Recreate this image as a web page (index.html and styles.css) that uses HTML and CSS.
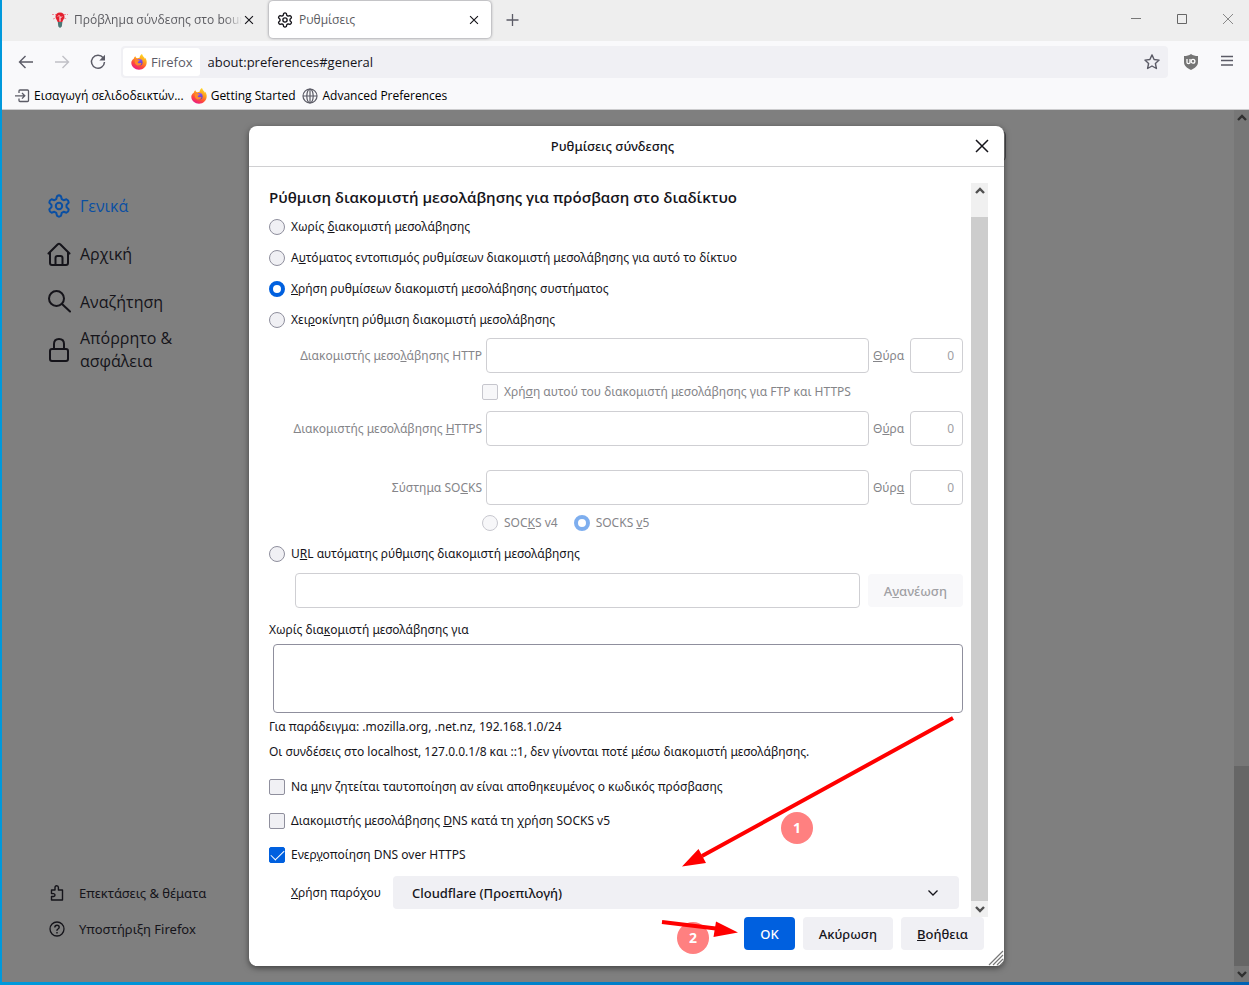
FILE: index.html
```
<!DOCTYPE html>
<html lang="el">
<head>
<meta charset="utf-8">
<title>Ρυθμίσεις</title>
<link rel="stylesheet" href="styles.css">
</head>
<body>
<svg class="defs" width="0" height="0" aria-hidden="true">
  <defs>
    <linearGradient id="flame" x1="0.8" y1="0" x2="0.3" y2="1">
      <stop offset="0" stop-color="#ffe226"/><stop offset="0.4" stop-color="#ff9a1f"/><stop offset="0.7" stop-color="#ff4a3a"/><stop offset="1" stop-color="#e8178a"/>
    </linearGradient>
    <linearGradient id="globe" x1="0.3" y1="0" x2="0.6" y2="1">
      <stop offset="0" stop-color="#9059ff"/><stop offset="1" stop-color="#5b3bc4"/>
    </linearGradient>
    <symbol id="firefox" viewBox="0 0 16 16">
      <path fill="url(#flame)" d="M15.400 6.200c-.3-1.200-1-2.200-1.700-2.700.2.600.3 1 .3 1.500C13.300 3.200 11.700 2.200 11 0 9.400 1 8.700 2.500 8.600 3.700c-.9 0-1.700.2-2.400.6-1.100-.3-1.600-1-1.700-2C3.400 3 2.900 3.900 2.800 4.700 1.200 5.700.2 7.300.3 9.100.6 12.900 3.900 15.800 8 15.800c4.300 0 7.700-3.400 7.700-7.500 0-.8-.1-1.400-.3-2.100z"/>
      <circle cx="8.300" cy="8.300" r="3.300" fill="url(#globe)"/>
      <path fill="#ff8a2a" d="M3.800 6.200c1-.8 2.200-.8 3.100-.4.700.3 1.100.5 1.800.4-.1.900-1.300 1.100-1.800 1.600-.4.500 0 1.300.9 1.500 1 .2 1.900-.4 2.700-.1-.5 1.500-1.800 2.400-3.300 2.300-2.200-.1-3.900-2.400-3.400-5.300z"/>
    </symbol>
    <symbol id="gear" viewBox="0 0 24 24">
      <path fill="none" stroke="currentColor" stroke-width="2" stroke-linejoin="round" d="M10 2.200Q12 .6 14 2.200L14.700 5.100L16.600 6.200L19.500 5.300Q21.900 6.300 21.600 8.800L19.500 10.900V13.100L21.600 15.200Q21.900 17.700 19.500 18.700L16.600 17.800L14.700 18.900L14 21.800Q12 23.400 10 21.800L9.300 18.900L7.400 17.800L4.500 18.700Q2.100 17.700 2.400 15.200L4.500 13.100V10.900L2.400 8.800Q2.100 6.300 4.500 5.300L7.400 6.200L9.300 5.100Z"/>
      <circle cx="12" cy="12" r="3.200" fill="none" stroke="currentColor" stroke-width="2"/>
    </symbol>
    <symbol id="cross" viewBox="0 0 16 16"><path fill="none" stroke="currentColor" stroke-width="1.300" d="M3.500 3.500l9 9M12.500 3.500l-9 9"/></symbol>
    <symbol id="up" viewBox="0 0 16 16"><path fill="none" stroke="currentColor" stroke-width="2.400" d="M4 10l4-4 4 4"/></symbol>
    <symbol id="down" viewBox="0 0 16 16"><path fill="none" stroke="currentColor" stroke-width="2.400" d="M4 6l4 4 4-4"/></symbol>
  </defs>
</svg>

<header class="chrome">
  <div class="titlebar">
    <div class="tab">
      <svg class="i16" viewBox="0 0 16 16"><path stroke="#f28b9a" stroke-width="1" stroke-dasharray="2 1" d="M0 2.500h4M1 7l3-1M12 2.500h4M12 6l3 1"/><path fill="#e3202e" d="M8 .5c-2.900 0-4.500 2-4.500 4.200 0 2 1.500 3 2.200 5.300h4.600c.7-2.300 2.200-3.300 2.200-5.300C12.500 2.500 10.900.5 8 .5z"/><path fill="none" stroke="#fff" d="M6 4.500q1-2 2 0t2 0M8 5v4.500"/><path fill="#4c7775" d="M5.800 10h4.600l-.6 4.500L8 16l-1.700-1.500z"/></svg>
      <span class="tab-title tab-fade">Πρόβλημα σύνδεσης στο bourd</span>
      <button class="plain" aria-label="Κλείσιμο"><svg class="i14"><use href="#cross"/></svg></button>
    </div>
    <div class="tab tab-active">
      <svg class="i16"><use href="#gear"/></svg>
      <span class="tab-title">Ρυθμίσεις</span>
      <button class="plain" aria-label="Κλείσιμο"><svg class="i14"><use href="#cross"/></svg></button>
    </div>
    <button class="plain new-tab" aria-label="Νέα καρτέλα"><svg class="i16" viewBox="0 0 16 16"><path fill="none" stroke="#5b5b66" stroke-width="1.300" d="M2.500 8h12M8.500 2v12"/></svg></button>
    <div class="window-buttons">
      <button class="plain" aria-label="Ελαχιστοποίηση"><svg class="i16" viewBox="0 0 16 16"><path stroke="#777" d="M3 7.500h10"/></svg></button>
      <button class="plain" aria-label="Μεγιστοποίηση"><svg class="i16" viewBox="0 0 16 16"><path fill="none" stroke="#666" d="M3.500 3.500h9v9h-9z"/></svg></button>
      <button class="plain" aria-label="Κλείσιμο παραθύρου"><svg class="i16" viewBox="0 0 16 16"><path stroke="#888" d="M3 3l10 10M13 3L3 13"/></svg></button>
    </div>
  </div>
  <div class="navbar">
    <button class="plain tool" aria-label="Πίσω"><svg class="i16" viewBox="0 0 16 16"><path fill="none" stroke="#5b5b66" stroke-width="1.400" d="M15 8H1.500M7.500 2l-6 6 6 6"/></svg></button>
    <button class="plain tool" aria-label="Εμπρός"><svg class="i16" viewBox="0 0 16 16"><path fill="none" stroke="#c0c0c6" stroke-width="1.400" d="M1 8h13.500M8.500 2l6 6-6 6"/></svg></button>
    <button class="plain tool" aria-label="Ανανέωση"><svg class="i16" viewBox="0 0 16 16"><path fill="none" stroke="#5b5b66" stroke-width="1.500" d="M13.200 3.800A6.500 6.500 0 1 0 14.500 8"/><path fill="#5b5b66" d="M15 .8v5.700H9.300z"/></svg></button>
    <div class="urlbar">
      <button class="identity"><svg class="i16"><use href="#firefox"/></svg>Firefox</button>
      <input class="url" type="text" aria-label="Διεύθυνση" value="about:preferences#general">
      <button class="plain star" aria-label="Σελιδοδείκτης"><svg class="i16" viewBox="0 0 16 16"><path fill="none" stroke="#5b5b66" stroke-width="1.400" stroke-linejoin="round" d="M8 .9l2.100 4.600 5 .6-3.700 3.400 1 5L8 12l-4.400 2.500 1-5L.9 6.100l5-.6z"/></svg></button>
    </div>
    <button class="plain tool" aria-label="uBlock"><svg class="i16" viewBox="0 0 16 16"><path fill="#757575" d="M8 0c2 1.400 4.300 2 7 2v6c0 4-3.200 6.200-7 8-3.800-1.800-7-4-7-8V2c2.700 0 5-.6 7-2z"/><path fill="none" stroke="#fff" stroke-width="1.300" d="M4 5v3.400c0 1.500 3 1.500 3 0V5"/><circle cx="10" cy="7.300" r="1.900" fill="none" stroke="#fff" stroke-width="1.300"/></svg></button>
    <button class="plain tool" aria-label="Μενού"><svg class="i16" viewBox="0 0 16 16"><path stroke="#5b5b66" stroke-width="1.300" d="M2 2.500h12M2 6.500h12M2 11h12"/></svg></button>
  </div>
  <nav class="bookmarks">
    <a href="#"><svg class="i16" viewBox="0 0 16 16"><path fill="none" stroke="#5b5b66" stroke-width="1.300" d="M5 5V3q0-1 1-1h7.500q1 0 1 1v9.500q0 1-1 1H6q-1 0-1-1v-2M1 7.800h9.500M8 5l2.800 2.800L8 10.600"/></svg>Εισαγωγή σελιδοδεικτών...</a>
    <a href="#"><svg class="i16"><use href="#firefox"/></svg>Getting Started</a>
    <a href="#"><svg class="i16" viewBox="0 0 16 16"><g fill="none" stroke="#5b5b66" stroke-width="1.200"><circle cx="8" cy="8" r="7"/><ellipse cx="8" cy="8" rx="3.200" ry="7"/><path d="M1 8h14M8 1v14"/></g></svg>Advanced Preferences</a>
  </nav>
</header>

<div class="stage">
  <div class="page">
    <nav class="sidebar">
      <a class="category selected" href="#"><svg class="i24"><use href="#gear"/></svg>Γενικά</a>
      <a class="category" href="#"><svg class="i24" viewBox="0 0 24 24"><path fill="none" stroke="currentColor" stroke-width="2" stroke-linejoin="round" stroke-linecap="round" d="M1.500 11.500L10.800 2.200q1.200-1 2.400 0l9.300 9.300M3 10.500V21q0 2 2 2h14q2 0 2-2V10.500M8.500 23v-7q0-2 2-2h3q2 0 2 2v7"/></svg>Αρχική</a>
      <a class="category" href="#"><svg class="i24" viewBox="0 0 24 24"><g fill="none" stroke="currentColor" stroke-width="2" stroke-linecap="round"><circle cx="9.500" cy="8.500" r="7.500"/><path d="M15 14l8 7.500"/></g></svg>Αναζήτηση</a>
      <a class="category" href="#"><svg class="i24" viewBox="0 0 24 24"><g fill="none" stroke="currentColor" stroke-width="2"><rect x="3" y="11" width="18" height="12" rx="2"/><path d="M7 11V6q0-5 5-5t5 5v5"/></g></svg><span>Απόρρητο &amp; ασφάλεια</span></a>
      <div class="sidebar-foot">
        <a href="#"><svg class="i16" viewBox="0 0 16 16"><path fill="none" stroke="currentColor" stroke-width="1.400" stroke-linejoin="round" d="M2.500 5H6V2.500q0-1.800 1.700-1.800t1.700 1.800V5h4.100v10h-11v-3.500h2.200q1.300 0 1.300-1.400T4.700 8.600H2.500z"/></svg>Επεκτάσεις &amp; θέματα</a>
        <a href="#"><svg class="i16" viewBox="0 0 16 16"><circle cx="8" cy="8" r="7" fill="none" stroke="currentColor" stroke-width="1.300"/><path fill="none" stroke="currentColor" stroke-width="1.400" d="M5.800 6.500q0-2.200 2.200-2.200t2.200 2q0 1-1.200 1.700T8 9.800M8 11v1.500"/></svg>Υποστήριξη Firefox</a>
      </div>
    </nav>
    <main class="pane"><div class="pane-search"></div></main>
    <div class="scrollbar page-scroll"><svg class="i16"><use href="#up"/></svg><div class="thumb"></div><svg class="i16"><use href="#down"/></svg></div>
  </div>

  <div class="overlay">
    <form class="dialog" role="dialog" aria-labelledby="dialog-title">
      <div class="dialog-head">
        <h1 id="dialog-title">Ρυθμίσεις σύνδεσης</h1>
        <button type="button" class="plain" aria-label="Κλείσιμο"><svg class="i20" viewBox="0 0 20 20"><path stroke="#15141a" stroke-width="1.500" d="M4 4l12 12M16 4L4 16"/></svg></button>
      </div>
      <div class="dialog-body">
        <div class="settings">
          <h2>Ρύθμιση διακομιστή μεσολάβησης για πρόσβαση στο διαδίκτυο</h2>
          <label class="choice"><input type="radio" name="proxy"><span>Χωρίς <u>δ</u>ιακομιστή μεσολάβησης</span></label>
          <label class="choice"><input type="radio" name="proxy"><span>Α<u>υ</u>τόματος εντοπισμός ρυθμίσεων διακομιστή μεσολάβησης για αυτό το δίκτυο</span></label>
          <label class="choice"><input type="radio" name="proxy" checked><span><u>Χ</u>ρήση ρυθμίσεων διακομιστή μεσολάβησης συστήματος</span></label>
          <label class="choice"><input type="radio" name="proxy"><span>Χει<u>ρ</u>οκίνητη ρύθμιση διακομιστή μεσολάβησης</span></label>

          <div class="manual">
            <label class="host-label" for="http">Διακομιστής μεσο<u>λ</u>άβησης HTTP</label>
            <input id="http" class="field" type="text" disabled>
            <label for="http-port"><u>Θ</u>ύρα</label>
            <input id="http-port" class="field port" type="text" value="0" disabled>
            <div class="sub share"><label class="choice"><input type="checkbox" disabled><span>Χρή<u>σ</u>η αυτού του διακομιστή μεσολάβησης για FTP και HTTPS</span></label></div>
            <label class="host-label" for="https">Διακομιστής μεσολάβησης <u>H</u>TTPS</label>
            <input id="https" class="field" type="text" disabled>
            <label for="https-port">Θ<u>ύ</u>ρα</label>
            <input id="https-port" class="field port" type="text" value="0" disabled>
            <div class="spacer"></div>
            <label class="host-label" for="socks">Σύστημα SO<u>C</u>KS</label>
            <input id="socks" class="field" type="text" disabled>
            <label for="socks-port">Θύρ<u>α</u></label>
            <input id="socks-port" class="field port" type="text" value="0" disabled>
            <div class="sub versions">
              <label class="choice"><input type="radio" name="socksver" disabled><span>SOC<u>K</u>S v4</span></label>
              <label class="choice"><input type="radio" name="socksver" checked disabled><span>SOCKS <u>v</u>5</span></label>
            </div>
          </div>

          <label class="choice choice-url"><input type="radio" name="proxy"><span>U<u>R</u>L αυτόματης ρύθμισης διακομιστή μεσολάβησης</span></label>
          <div class="auto-url">
            <input class="field" type="text" aria-label="URL" disabled>
            <button type="button" class="btn" disabled>Α<u>ν</u>ανέωση</button>
          </div>

          <label class="line except-label" for="except">Χωρίς δια<u>κ</u>ομιστή μεσολάβησης για</label>
          <textarea id="except" class="except"></textarea>
          <p class="line">Για παράδειγμα: .mozilla.org, .net.nz, 192.168.1.0/24</p>
          <p class="line">Οι συνδέσεις στο localhost, 127.0.0.1/8 και ::1, δεν γίνονται ποτέ μέσω διακομιστή μεσολάβησης.</p>

          <div class="options">
            <label class="choice"><input type="checkbox"><span>Να <u>μ</u>ην ζητείται ταυτοποίηση αν είναι αποθηκευμένος ο κωδικός πρόσβασης</span></label>
            <label class="choice"><input type="checkbox"><span>Διακομιστής μεσολάβησης <u>D</u>NS κατά τη χρήση SOCKS v5</span></label>
            <label class="choice"><input type="checkbox" checked><span>Ενερ<u>γ</u>οποίηση DNS over HTTPS</span></label>
          </div>
          <div class="provider">
            <label for="provider"><u>Χ</u>ρήση παρόχου</label>
            <div class="select-wrap">
              <select id="provider"><option>Cloudflare (Προεπιλογή)</option></select>
              <svg class="i16 chevron" viewBox="0 0 16 16"><path fill="none" stroke="#15141a" stroke-width="1.300" d="M3.500 5.500L8 10l4.500-4.500"/></svg>
            </div>
          </div>
        </div>
        <div class="scrollbar dialog-scroll"><svg class="i16"><use href="#up"/></svg><div class="thumb"></div><svg class="i16"><use href="#down"/></svg></div>
      </div>
      <div class="dialog-foot">
        <button type="button" class="btn primary">OK</button>
        <button type="button" class="btn">Ακύρωση</button>
        <button type="button" class="btn"><u>Β</u>οήθεια</button>
      </div>
      <svg class="grip" viewBox="0 0 16 16"><path stroke="#777" stroke-width="1.200" d="M1 15L15 1M5 15L15 5M9 15l6-6M12.500 15l2.500-2.500"/></svg>
      <svg class="notes" width="290" height="250" viewBox="0 0 290 250">
        <circle cx="143" cy="118" r="16" fill="#ff8080"/>
        <circle cx="39" cy="228" r="16" fill="#ff8080"/>
        <path stroke="#f00" stroke-width="4" d="M299 8L48 146M8 212L66 219"/>
        <path fill="#f00" d="M28 156.500L44.500 139 52 153zM84 222.500L62 211.500 59.500 227z"/>
        <text x="143" y="123">1</text>
        <text x="39" y="233">2</text>
      </svg>
    </form>
  </div>
</div>
</body>
</html>
```
FILE: styles.css
```
* { box-sizing: border-box; }
body {
  margin: 0;
  min-height: 100vh;
  padding: 0 0 3px 2px;
  display: flex;
  flex-direction: column;
  background: linear-gradient(90deg, #0099dc, #0062b4);
  font: 12px/20px "Noto Sans", "Open Sans", sans-serif;
  color: #15141a;
}
.defs { position: absolute; }
svg { display: block; flex: none; }
a { color: inherit; text-decoration: none; }
h1, h2, p { margin: 0; }
button, input, select, textarea { font: inherit; color: inherit; margin: 0; }
.i14 { width: 14px; height: 14px; }
.i16 { width: 16px; height: 16px; }
.i20 { width: 20px; height: 20px; }
.i24 { width: 24px; height: 24px; }
.plain { display: flex; align-items: center; justify-content: center; padding: 0; border: 0; background: none; }

/* Browser chrome */
.chrome { background: #f9f9fb; border-bottom: 1px solid #ccccce; font-family: "Open Sans", "Noto Sans", sans-serif; }
.titlebar { display: flex; height: 41px; padding-left: 42px; background: #eee; }
.tab { display: flex; align-items: center; width: 222px; height: 37px; margin-top: 1px; padding: 0 10px 0 8px; color: #15141a; }
.tab-active { margin-left: 3px; background: #fff; border-radius: 4px; box-shadow: 0 0 3px #77777f; }
.tab-title { flex: 1; margin-left: 6px; overflow: hidden; white-space: nowrap; color: #5b5b60; }
.tab-fade { mask-image: linear-gradient(90deg, #000 90%, transparent); }
.new-tab { width: 42px; height: 37px; margin-top: 1px; }
.window-buttons { display: flex; margin-left: auto; }
.window-buttons button { width: 46px; height: 38px; padding-left: 4px; }
.navbar { display: flex; align-items: center; height: 42px; padding: 0 4px 0 6px; }
.tool { width: 36px; height: 36px; }
.urlbar { display: flex; align-items: center; flex: 1; height: 32px; margin: 0 5px 0 5px; padding: 2px; background: #f0f0f4; border-radius: 4px; font-size: 13px; }
.identity { display: flex; align-items: center; gap: 4px; height: 28px; padding: 0 7px 0 8px; border: 0; border-radius: 3px; background: #fff; color: #5b5b66; }
.url { flex: 1; min-width: 0; padding: 0 8px; border: 0; background: none; outline: 0; }
.star { width: 28px; height: 28px; }
.bookmarks { display: flex; align-items: center; gap: 7px; height: 26px; padding-left: 12px; color: #000; }
.bookmarks a { display: flex; align-items: center; gap: 4px; }

/* Preferences page */
.stage { flex: 1; display: grid; grid-template-columns: minmax(0, 1fr); }
.page, .overlay { grid-area: 1 / 1; }
.page { display: flex; background: #7f7f7f; }
.sidebar { display: flex; flex-direction: column; width: 242px; padding: 72px 44px 35px 45px; font-family: "Open Sans", "Noto Sans", sans-serif; font-size: 16px; line-height: 23px; }
.category { display: flex; align-items: center; gap: 9px; height: 48px; }
.selected { color: #0a4fa3; }
.sidebar-foot { margin-top: auto; font-family: "Noto Sans", "Open Sans", sans-serif; font-size: 13px; }
.sidebar-foot a { display: flex; align-items: center; gap: 14px; height: 36px; padding-left: 2px; white-space: nowrap; }
.pane { flex: 1; }
.pane-search { max-width: 742px; height: 30px; margin: 21px 0 0 20px; border: 1px solid #48484c; border-radius: 4px; }
.scrollbar { display: flex; flex-direction: column; align-items: center; color: #505050; }
.page-scroll { width: 15px; background: #777; color: #303030; }
.page-scroll .thumb { width: 100%; height: 200px; margin-top: auto; background: #666; }

/* Dialog */
.overlay { display: flex; justify-content: center; padding: 16px 0 16px 2px; }
.dialog { position: relative; display: flex; flex-direction: column; width: 100%; max-width: 755px; background: #fff; border-radius: 8px; box-shadow: 0 2px 6px rgba(0, 0, 0, .5); }
.dialog-head { display: flex; align-items: center; height: 41px; padding: 0 12px 0 4px; border-bottom: 1px solid #d0d0d2; }
.dialog-head h1 { flex: 1; text-align: center; font-size: 13px; font-weight: 500; }
.dialog-body { display: flex; flex: 1; gap: 8px; padding: 16px 16px 0 20px; }
.settings { flex: 1; min-width: 0; }
.settings h2 { height: 28px; font-family: "Open Sans", "Noto Sans", sans-serif; font-size: 15px; line-height: 29px; font-weight: 600; }
.choice { display: flex; align-items: center; gap: 6px; height: 31px; }
.choice input { appearance: none; flex: none; width: 16px; height: 16px; border: 1px solid #8f8f9d; background: #f0f0f4; border-radius: 2px; }
.choice input[type="radio"] { border-radius: 50%; }
.choice input[type="radio"]:checked { border: 4px solid #0060df; background: #fff; }
.choice input[type="checkbox"]:checked { display: grid; place-items: center; border-color: #0060df; background: #0060df; }
.choice input[type="checkbox"]:checked::after { content: ""; width: 12px; height: 6px; margin-bottom: 4px; border: solid #fff; border-width: 0 0 1px 1px; transform: rotate(-45deg); }
.choice input:disabled { opacity: .5; }
.manual { display: grid; grid-template-columns: 213px minmax(0, 1fr) 33px 53px; column-gap: 4px; align-items: center; margin-top: 3px; color: #858589; }
.host-label { text-align: right; white-space: nowrap; }
.field { width: 100%; height: 35px; padding: 0 8px; border: 1px solid #cfcfd3; border-radius: 4px; background: #fff; }
.port { text-align: right; color: #a0a0a4; }
.sub { grid-column: 1 / -1; display: flex; gap: 16px; padding-left: 213px; }
.share .choice { height: 38px; }
.spacer { grid-column: 1 / -1; height: 24px; }
.versions .choice { height: 36px; }
.choice-url { height: 26px; }
.auto-url { display: flex; align-items: center; gap: 8px; margin: 6px 0 12px 26px; }
.auto-url .field { flex: 1; min-width: 0; }
.line { display: block; height: 20px; margin-bottom: 5px; }
.except-label { margin-bottom: 4px; }
.except { display: block; width: calc(100% - 4px); height: 69px; margin: 0 0 4px 4px; border: 1px solid #8f8f9d; border-radius: 4px; background: #fff; resize: none; }
.options { margin-top: 8px; }
.options .choice { height: 34px; }
.provider { display: flex; align-items: center; gap: 12px; margin: 4px 4px 8px 22px; }
.select-wrap { flex: 1; display: grid; align-items: center; }
.select-wrap > * { grid-area: 1 / 1; }
.select-wrap select { appearance: none; width: 100%; height: 33px; padding: 0 19px; border: 0; border-radius: 4px; background: #f0f0f4; font-size: 13px; font-weight: 500; }
.chevron { justify-self: end; margin-right: 18px; pointer-events: none; }
.dialog-scroll { width: 17px; background: #f0f0f0; }
.dialog-scroll .thumb { flex: 1; width: 100%; margin-top: 18px; background: #cdcdcd; }
.dialog-foot { display: flex; justify-content: flex-end; gap: 8px; padding: 0 20px 16px; }
.btn { height: 33px; padding: 0 16px; border: 0; border-radius: 4px; background: #f0f0f4; font-size: 13px; font-weight: 500; }
.btn:disabled { background: #f8f8fa; color: #a0a0a4; }
.primary { background: #0060df; color: #fff; }
.grip { position: absolute; right: 0; bottom: 0; width: 16px; height: 16px; }
.notes { position: absolute; right: 60px; bottom: 6px; overflow: visible; pointer-events: none; }
.notes text { fill: #fff; font-size: 14px; font-weight: 700; text-anchor: middle; }
```
